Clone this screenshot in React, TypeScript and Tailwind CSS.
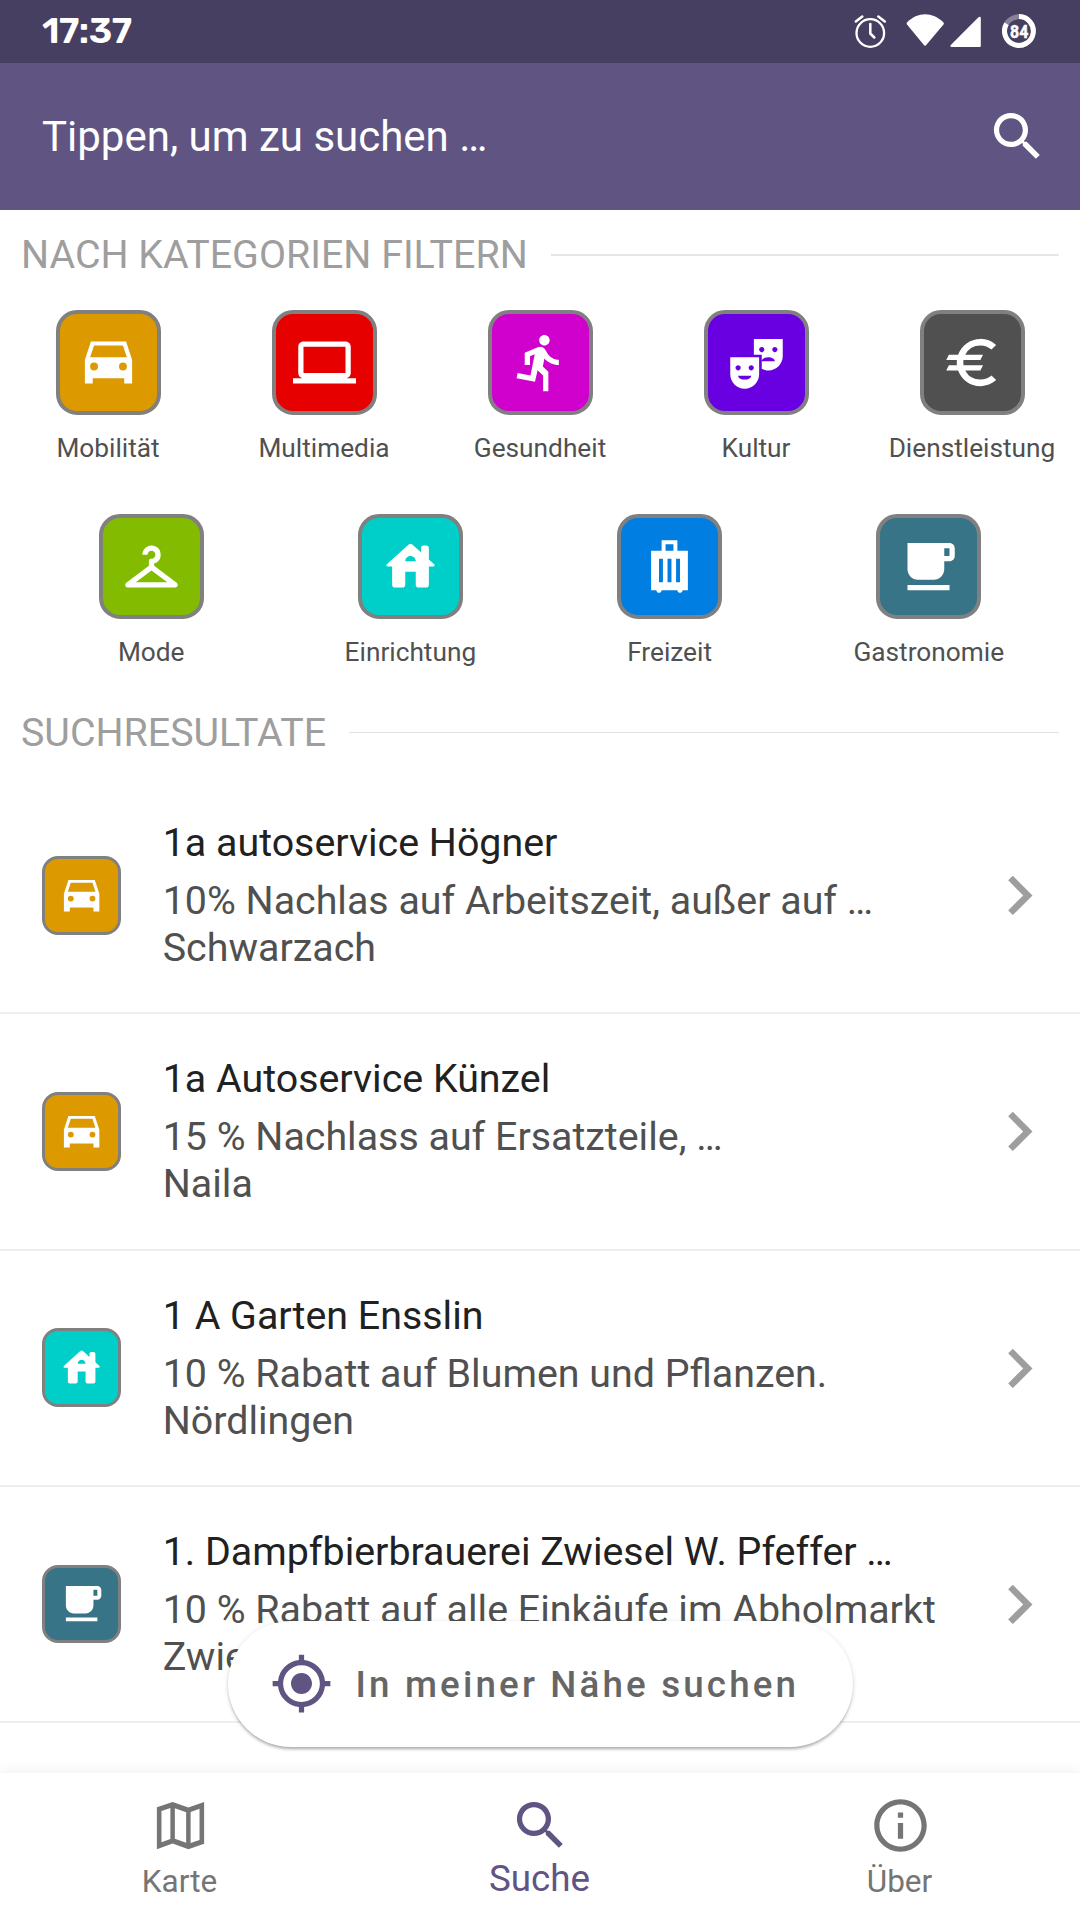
import React from "react";
import {
  MdCheckroom,
  MdChevronRight,
  MdDirectionsRun,
  MdEuro,
  MdGpsFixed,
  MdLaptop,
  MdOutlineInfo,
  MdSearch,
  MdTheaterComedy,
} from "react-icons/md";

type IconProps = { className?: string };

function CarIcon({ className }: IconProps) {
  return (
    <svg viewBox="0 0 24 24" fill="currentColor" fillRule="evenodd" className={className}>
      <path d="M18.7 4H5.3L3 11v9h3v-2h12v2h3v-9L18.7 4zM6.5 15a1.5 1.5 0 1 1 0-3 1.5 1.5 0 0 1 0 3zm11 0a1.5 1.5 0 1 1 0-3 1.5 1.5 0 0 1 0 3zM5 10l1.5-4.5h11L19 10H5z" />
    </svg>
  );
}

function HouseIcon({ className }: IconProps) {
  return (
    <svg viewBox="0 0 24 24" fill="currentColor" className={className}>
      <path d="M19 9.3V5c0-.55-.45-1-1-1h-1c-.55 0-1 .45-1 1v1.6l-3.33-3c-.38-.34-.96-.34-1.34 0l-8.36 7.53c-.34.3-.13.87.33.87H5v7c0 .55.45 1 1 1h3c.55 0 1-.45 1-1v-5h4v5c0 .55.45 1 1 1h3c.55 0 1-.45 1-1v-7h1.7c.46 0 .68-.57.33-.87L19 9.3zm-9 .7c0-1.1.9-2 2-2s2 .9 2 2h-4z" />
    </svg>
  );
}

function LuggageIcon({ className }: IconProps) {
  return (
    <svg viewBox="0 0 24 24" fill="currentColor" fillRule="evenodd" className={className}>
      <path d="M19 6h-4V2H9v4H5v15h2c0 .55.45 1 1 1s1-.45 1-1h6c0 .55.45 1 1 1s1-.45 1-1h2V6zM9.5 18H8V9h1.5v9zm3.25 0h-1.5V9h1.5v9zm.75-12h-3V3.5h3V6zM16 18h-1.5V9H16v9z" />
    </svg>
  );
}

function CupIcon({ className }: IconProps) {
  return (
    <svg viewBox="0 0 24 24" fill="currentColor" className={className}>
      <path d="M20 3H4v10c0 2.21 1.79 4 4 4h6c2.21 0 4-1.79 4-4v-3h2c1.11 0 2-.9 2-2V5c0-1.11-.89-2-2-2zm0 5h-2V5h2v3zM4 19h16v2H4v-2z" />
    </svg>
  );
}

function MapIcon({ className }: IconProps) {
  return (
    <svg viewBox="0 0 24 24" fill="currentColor" fillRule="evenodd" className={className}>
      <path d="M21 3l-6 2.1L9 3 3 5.02V21l6-2.1 6 2.1 6-2.02V3zM9.85 5.42l4.3 1.5v11.66l-4.3-1.5V5.42zM4.75 6.5l3.4-1.14v11.8l-3.4 1.2V6.5zm14.5 11.04l-3.4 1.14V6.86l3.4-1.2v11.88z" />
    </svg>
  );
}

type IconType = React.ComponentType<IconProps>;
type Category = { label: string; icon: IconType; color: string };

const mobility: Category = { label: "Mobilität", icon: CarIcon, color: "bg-[#dc9900]" };
const furnishing: Category = { label: "Einrichtung", icon: HouseIcon, color: "bg-[#00cec9]" };
const gastronomy: Category = { label: "Gastronomie", icon: CupIcon, color: "bg-[#377487]" };

const firstRow: Category[] = [
  mobility,
  { label: "Multimedia", icon: MdLaptop, color: "bg-[#e60000]" },
  { label: "Gesundheit", icon: MdDirectionsRun, color: "bg-[#d000cd]" },
  { label: "Kultur", icon: MdTheaterComedy, color: "bg-[#6800e1]" },
  { label: "Dienstleistung", icon: MdEuro, color: "bg-[#505050]" },
];

const secondRow: Category[] = [
  { label: "Mode", icon: MdCheckroom, color: "bg-[#82bb00]" },
  furnishing,
  { label: "Freizeit", icon: LuggageIcon, color: "bg-[#007ee2]" },
  gastronomy,
];

const results = [
  { title: "1a autoservice Högner", text: "10% Nachlas auf Arbeitszeit, außer auf …", city: "Schwarzach", category: mobility },
  { title: "1a Autoservice Künzel", text: "15 % Nachlass auf Ersatzteile, …", city: "Naila", category: mobility },
  { title: "1 A Garten Ensslin", text: "10 % Rabatt auf Blumen und Pflanzen.", city: "Nördlingen", category: furnishing },
  { title: "1. Dampfbierbrauerei Zwiesel W. Pfeffer …", text: "10 % Rabatt auf alle Einkäufe im Abholmarkt", city: "Zwiesel", category: gastronomy },
];

function StatusBar() {
  return (
    <div className="flex h-[63px] shrink-0 items-start bg-[#473f62] pr-[44px] pl-[42px] text-white">
      <span className="mt-[9px] font-[Rubik,Roboto,sans-serif] text-[36.5px] leading-[43px] font-semibold tracking-[-0.5px]">17:37</span>
      <svg viewBox="0 0 34 63" className="ml-auto h-[63px] w-[34px]" fill="none" stroke="white" strokeLinecap="round">
        <circle cx="17.3" cy="33" r="13.8" strokeWidth="2.3" />
        <path d="M17.3 24v9.5l4 4" strokeWidth="2.5" strokeLinejoin="round" />
        <path d="M2.8 21.5l6.5-5M31.8 21.5l-6.5-5" strokeWidth="2.5" />
      </svg>
      <svg viewBox="0 0 38 63" className="ml-[19px] h-[63px] w-[38px]" fill="white">
        <path d="M1 22.5C11.5 11.5 26.5 11.5 37.5 22.5c.5.7.5 1.3 0 2L20 45.3c-.6.7-1.3.7-1.9 0L1 24.5c-.5-.7-.5-1.3 0-2z" />
      </svg>
      <svg viewBox="0 0 32 63" className="ml-[6px] h-[63px] w-[32px]" fill="white">
        <path d="M28.5 17.2c1-1 2.3-.6 2.3.8V46c0 .6-.3.9-.9.9H1.5C.3 46.9 0 45.8.8 45z" />
      </svg>
      <svg viewBox="0 0 34 63" className="ml-[20px] h-[63px] w-[34px]" fill="none" stroke="white">
        <circle cx="17" cy="31" r="14.4" strokeWidth="5" opacity="0.35" />
        <path d="M17 16.6A14.4 14.4 0 1 1 4.5 23.7" strokeWidth="5" />
        <text x="8.1" y="37.8" textLength="18.2" lengthAdjust="spacingAndGlyphs" fill="white" stroke="white" strokeWidth="0.5" className="font-[Roboto] text-[18px] font-bold">
          84
        </text>
      </svg>
    </div>
  );
}

function SectionHeader({ label, line }: { label: string; line: string }) {
  return (
    <div className="flex h-[46px] items-center gap-[23px] px-[21px] text-[39.375px] leading-[46px] text-[#9e9e9e]">
      <h2 className="whitespace-nowrap">{label}</h2>
      <div className={`flex-1 ${line}`} />
    </div>
  );
}

function CategoryTile({ label, icon: Icon, color }: Category) {
  return (
    <div className="flex w-[216px] flex-col items-center">
      <div className={`flex size-[105px] items-center justify-center rounded-[21px] border-4 border-[#808080] text-white ${color}`}>
        <Icon className="size-[63px] shrink-0" />
      </div>
      <span className="mt-[18px] text-[26.25px] leading-[31px] whitespace-nowrap text-[#505050]">{label}</span>
    </div>
  );
}

function ResultRow({ title, text, city, category }: (typeof results)[number]) {
  const Icon = category.icon;
  return (
    <div className="flex h-[236.25px] shrink-0 border-b-2 border-[#eeeeee] pr-[21px] pl-[42px]">
      <div className={`mt-[77.8px] flex size-[78.75px] shrink-0 items-center justify-center rounded-[16px] border-3 border-[#808080] text-white ${category.color}`}>
        <Icon className="size-[47.25px] shrink-0" />
      </div>
      <div className="ml-[42px] flex-1 pt-[41.2px] text-[39.375px] leading-[47px] whitespace-nowrap text-[#505050]">
        <div className="mb-[11px] text-[#212121]">{title}</div>
        <div>{text}</div>
        <div>{city}</div>
      </div>
      <MdChevronRight className="mt-[78px] size-[78.75px] shrink-0 text-[#9e9e9e]" />
    </div>
  );
}

export default function App() {
  return (
    <div className="relative flex h-[1920px] w-[1080px] flex-col overflow-hidden bg-white font-[Roboto,sans-serif]">
      <StatusBar />
      <header className="flex h-[147px] shrink-0 items-center justify-between bg-[#605483] pr-[31.5px] pl-[42px] text-white">
        <span className="text-[42px] leading-[49px]">Tippen, um zu suchen …</span>
        <MdSearch className="size-[63px]" />
      </header>

      <main className="min-h-0 flex-1 overflow-hidden">
        <div className="h-[568px] pt-[22px]">
          <SectionHeader label="NACH KATEGORIEN FILTERN" line="h-[2px] bg-[#e6e6e6]" />
          <div className="mt-[31.5px] flex">
            {firstRow.map((category) => (
              <CategoryTile key={category.label} {...category} />
            ))}
          </div>
          <div className="mt-[50.5px] flex justify-evenly">
            {secondRow.map((category) => (
              <CategoryTile key={category.label} {...category} />
            ))}
          </div>
          <div className="mt-[42px]">
            <SectionHeader label="SUCHRESULTATE" line="mb-px h-px bg-[#e0e0e0]" />
          </div>
        </div>
        {results.map((result) => (
          <ResultRow key={result.title} {...result} />
        ))}
      </main>

      <button className="absolute top-[1621px] left-[227.5px] flex h-[126px] w-[625px] items-center gap-[23px] rounded-full bg-white pl-[42px] shadow-[0_3px_3px_-1px_rgba(0,0,0,0.26),0_1px_5px_rgba(0,0,0,0.14)]">
        <MdGpsFixed className="mb-px size-[63px] text-[#605483]" />
        <span className="text-[36.75px] leading-[43px] font-medium tracking-[3.15px] whitespace-nowrap text-[#666666]">
          In meiner Nähe suchen
        </span>
      </button>

      <nav className="grid h-[147px] shrink-0 grid-cols-3 bg-white pt-[21px] text-[#757575] shadow-[0_-2px_12px_rgba(0,0,0,0.06)]">
        <div className="flex flex-col items-center">
          <MapIcon className="size-[63px]" />
          <span className="mt-[6px] pr-px text-[31.5px] leading-[37px]">Karte</span>
        </div>
        <div className="flex flex-col items-center text-[#605483]">
          <MdSearch className="size-[63px]" />
          <span className="pr-px text-[36.75px] leading-[43px]">Suche</span>
        </div>
        <div className="flex flex-col items-center">
          <MdOutlineInfo className="size-[63px]" />
          <span className="mt-[6px] pr-px text-[31.5px] leading-[37px]">Über</span>
        </div>
      </nav>
    </div>
  );
}
